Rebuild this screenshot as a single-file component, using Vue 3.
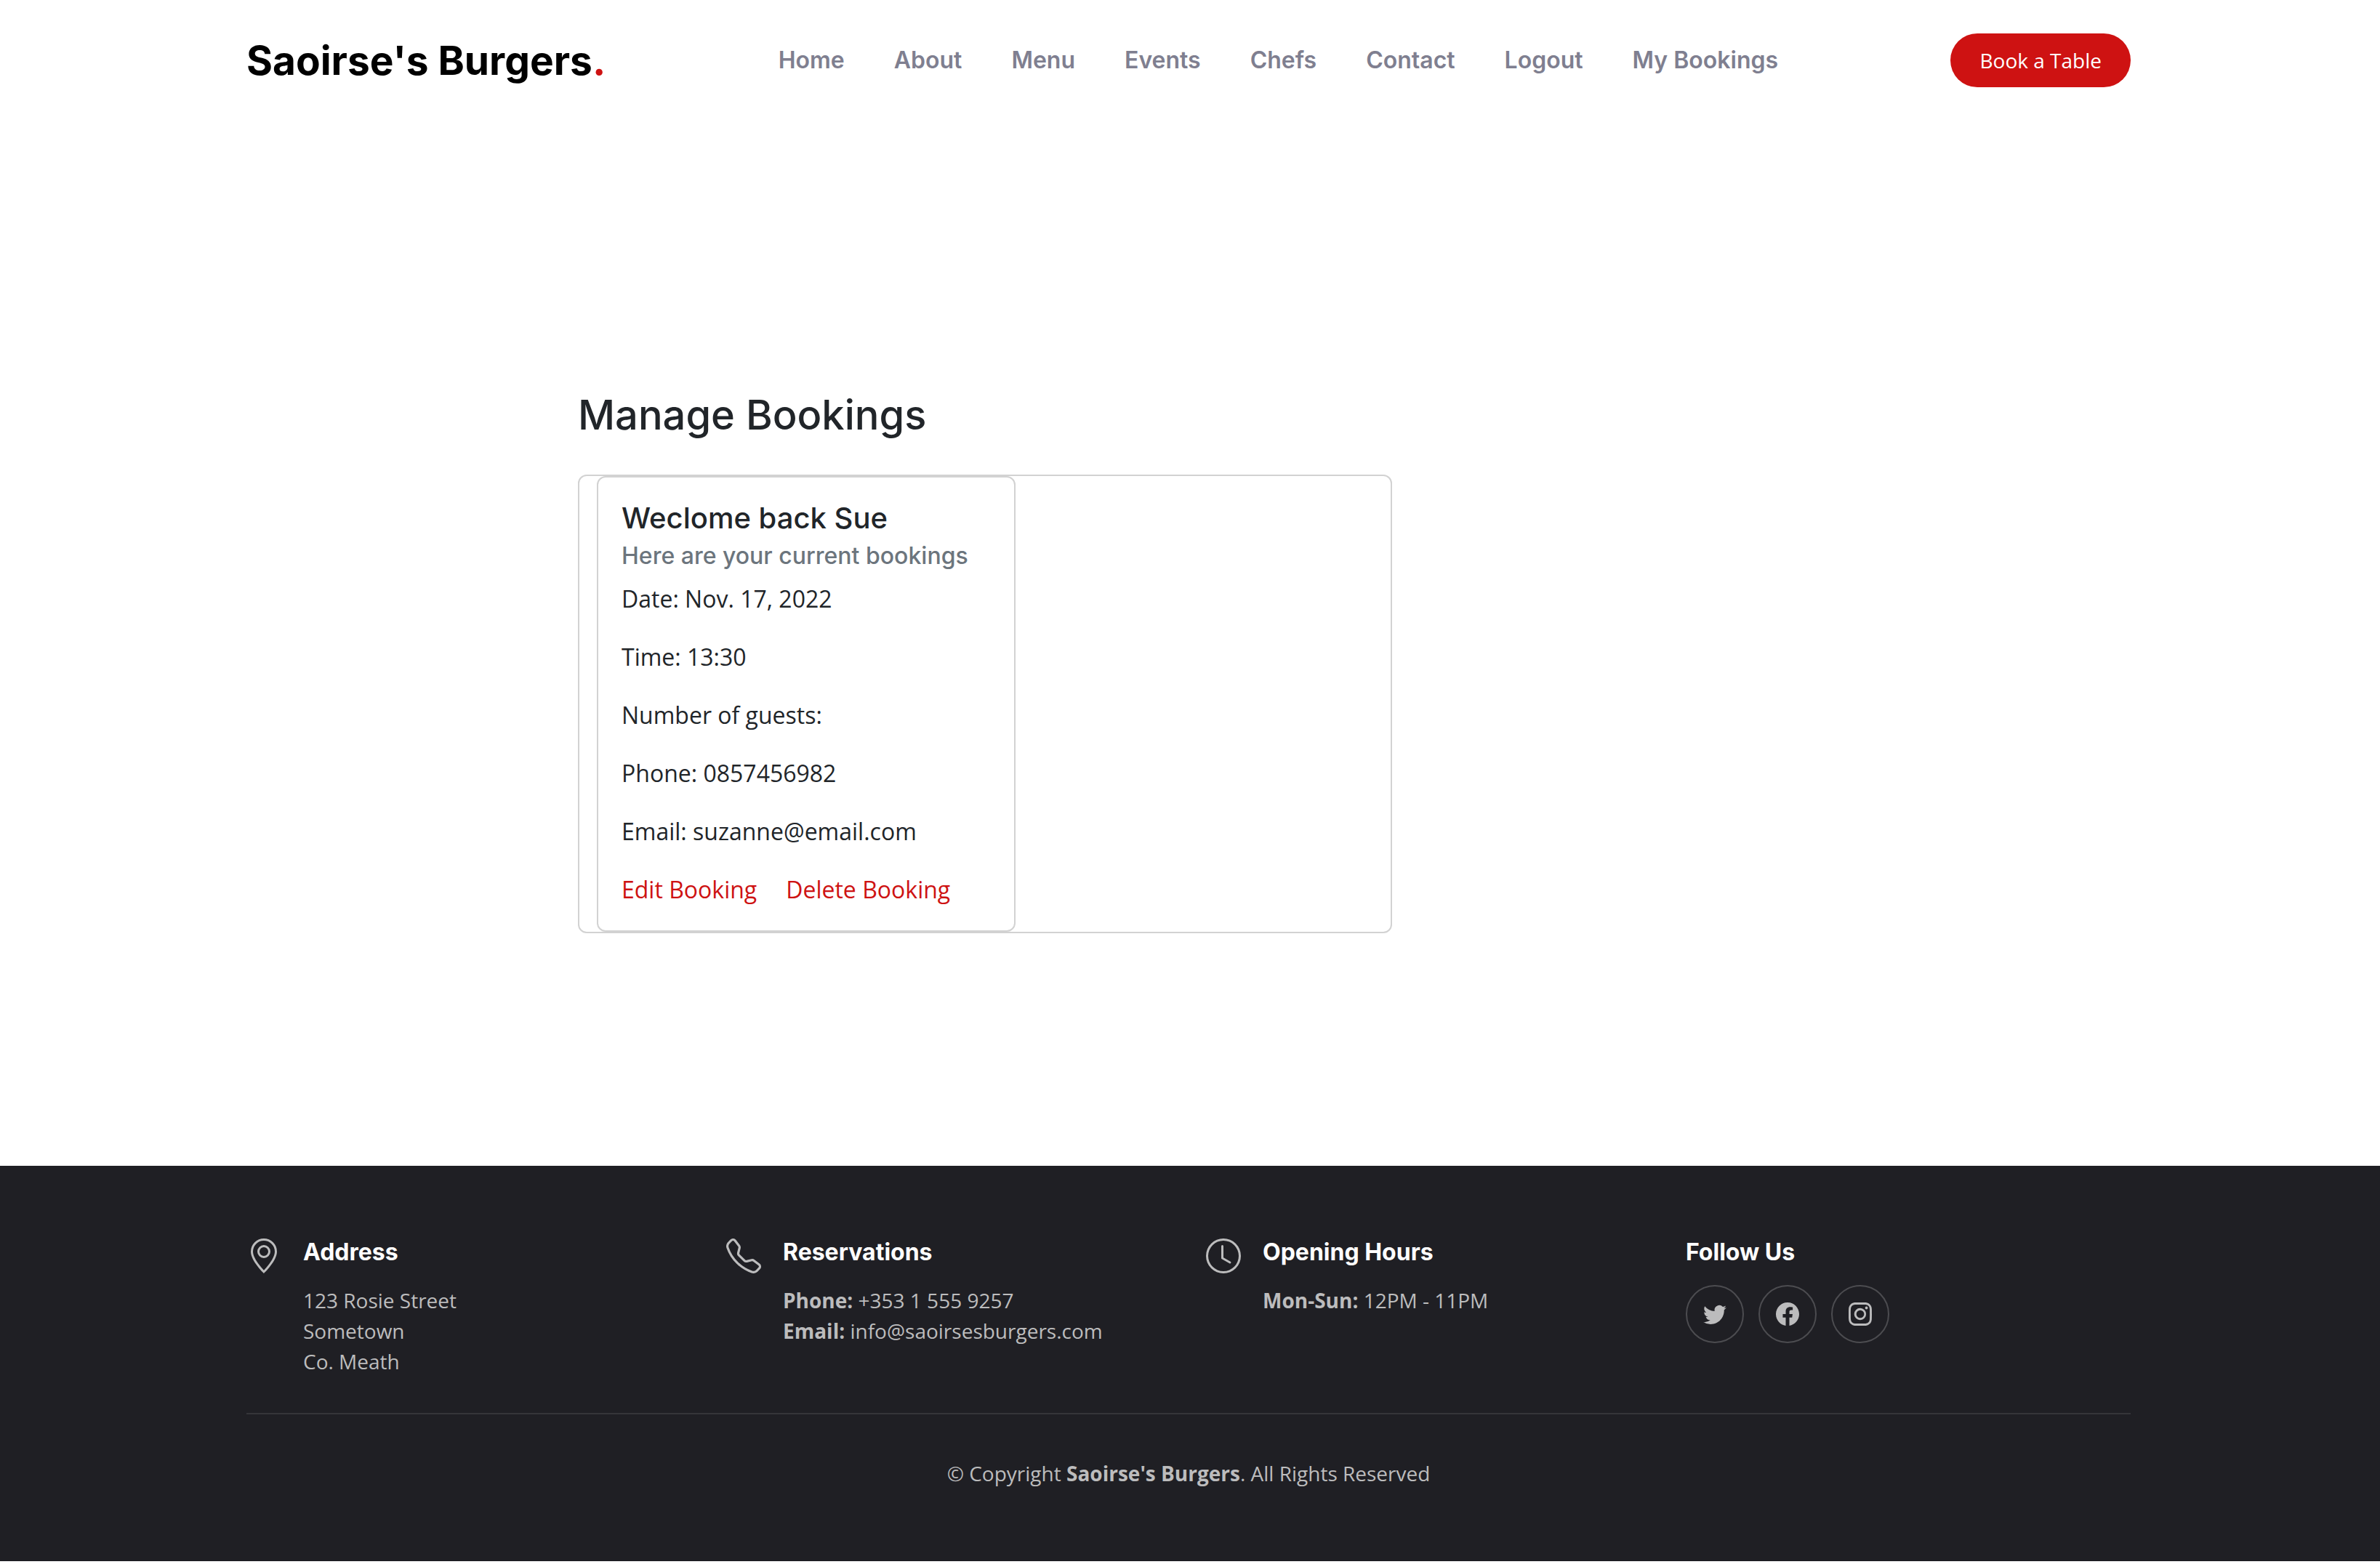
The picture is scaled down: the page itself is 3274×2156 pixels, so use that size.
<script setup>
const navLinks = ['Home', 'About', 'Menu', 'Events', 'Chefs', 'Contact', 'Logout', 'My Bookings']

const details = [
  'Date: Nov. 17, 2022',
  'Time: 13:30',
  'Number of guests:',
  'Phone: 0857456982',
  'Email: suzanne@email.com',
]

const socials = [
  {
    name: 'Twitter',
    path: 'M5.026 15c6.038 0 9.341-5.003 9.341-9.334 0-.14 0-.282-.006-.422A6.685 6.685 0 0 0 16 3.542a6.658 6.658 0 0 1-1.889.518 3.301 3.301 0 0 0 1.447-1.817 6.533 6.533 0 0 1-2.087.793A3.286 3.286 0 0 0 7.875 6.03a9.325 9.325 0 0 1-6.767-3.429 3.289 3.289 0 0 0 1.018 4.382A3.323 3.323 0 0 1 .64 6.575v.045a3.288 3.288 0 0 0 2.632 3.218 3.203 3.203 0 0 1-.865.115 3.23 3.23 0 0 1-.614-.057 3.283 3.283 0 0 0 3.067 2.277A6.588 6.588 0 0 1 .78 13.58a6.32 6.32 0 0 1-.78-.045A9.344 9.344 0 0 0 5.026 15z',
  },
  {
    name: 'Facebook',
    path: 'M16 8.049c0-4.446-3.582-8.05-8-8.05C3.58 0-.002 3.603-.002 8.05c0 4.017 2.926 7.347 6.75 7.951v-5.625h-2.03V8.05H6.75V6.275c0-2.017 1.195-3.131 3.022-3.131.876 0 1.791.157 1.791.157v1.98h-1.009c-.993 0-1.303.621-1.303 1.258v1.51h2.218l-.354 2.326H9.25V16c3.824-.604 6.75-3.934 6.75-7.951z',
  },
  {
    name: 'Instagram',
    path: 'M8 0C5.829 0 5.556.01 4.703.048 3.85.088 3.269.222 2.76.42a3.917 3.917 0 0 0-1.417.923A3.927 3.927 0 0 0 .42 2.76C.222 3.268.087 3.85.048 4.7.01 5.555 0 5.827 0 8.001c0 2.172.01 2.444.048 3.297.04.852.174 1.433.372 1.942.205.526.478.972.923 1.417.444.445.89.719 1.416.923.51.198 1.09.333 1.942.372C5.555 15.99 5.827 16 8 16s2.444-.01 3.298-.048c.851-.04 1.434-.174 1.943-.372a3.916 3.916 0 0 0 1.416-.923c.445-.445.718-.891.923-1.417.197-.509.332-1.09.372-1.942C15.99 10.445 16 10.173 16 8s-.01-2.445-.048-3.299c-.04-.851-.175-1.433-.372-1.941a3.926 3.926 0 0 0-.923-1.417A3.911 3.911 0 0 0 13.24.42c-.51-.198-1.092-.333-1.943-.372C10.443.01 10.172 0 7.998 0h.003zm-.717 1.442h.718c2.136 0 2.389.007 3.232.046.78.035 1.204.166 1.486.275.373.145.64.319.92.599.28.28.453.546.598.92.11.281.24.705.275 1.485.039.843.047 1.096.047 3.231s-.008 2.389-.047 3.232c-.035.78-.166 1.203-.275 1.485a2.47 2.47 0 0 1-.599.919c-.28.28-.546.453-.92.598-.28.11-.704.24-1.485.276-.843.038-1.096.047-3.232.047s-2.39-.009-3.233-.047c-.78-.036-1.203-.166-1.485-.276a2.478 2.478 0 0 1-.92-.598 2.48 2.48 0 0 1-.6-.92c-.109-.281-.24-.705-.275-1.485-.038-.843-.046-1.096-.046-3.233 0-2.136.008-2.388.046-3.231.036-.78.166-1.204.276-1.486.145-.373.319-.64.599-.92.28-.28.546-.453.92-.598.282-.11.705-.24 1.485-.276.738-.034 1.024-.044 2.515-.045v.002zm4.988 1.328a.96.96 0 1 0 0 1.92.96.96 0 0 0 0-1.92zm-4.27 1.122a4.109 4.109 0 1 0 0 8.217 4.109 4.109 0 0 0 0-8.217zm0 1.441a2.667 2.667 0 1 1 0 5.334 2.667 2.667 0 0 1 0-5.334z',
  },
]
</script>

<template>
  <div class="page">
    <header class="header">
      <div class="container header-row">
        <a href="#" class="logo">Saoirse's Burgers<span class="dot">.</span></a>
        <nav class="nav">
          <a v-for="link in navLinks" :key="link" href="#" class="nav-link">{{ link }}</a>
        </nav>
        <a href="#" class="book">Book a Table</a>
      </div>
    </header>

    <main class="main">
      <div class="container">
        <section class="bookings">
          <h2 class="heading">Manage Bookings</h2>
          <div class="panel">
            <article class="card">
              <h5 class="card-title">Weclome back Sue</h5>
              <h6 class="card-subtitle">Here are your current bookings</h6>
              <p v-for="line in details" :key="line" class="detail">{{ line }}</p>
              <div class="actions">
                <a href="#" class="action">Edit Booking</a>
                <a href="#" class="action">Delete Booking</a>
              </div>
            </article>
          </div>
        </section>
      </div>
    </main>

    <footer class="footer">
      <div class="container columns">
        <section class="column">
          <svg class="icon" viewBox="0 0 16 16" aria-hidden="true">
            <path d="M12.166 8.94c-.524 1.062-1.234 2.12-1.96 3.07A31.493 31.493 0 0 1 8 14.58a31.481 31.481 0 0 1-2.206-2.57c-.726-.95-1.436-2.008-1.96-3.07C3.304 7.867 3 6.862 3 6a5 5 0 0 1 10 0c0 .862-.305 1.867-.834 2.94zM8 16s6-5.686 6-10A6 6 0 0 0 2 6c0 4.314 6 10 6 10z" />
            <path d="M8 8a2 2 0 1 1 0-4 2 2 0 0 1 0 4zm0 1a3 3 0 1 0 0-6 3 3 0 0 0 0 6z" />
          </svg>
          <div>
            <h4 class="column-title">Address</h4>
            <p class="column-text">123 Rosie Street<br />Sometown<br />Co. Meath</p>
          </div>
        </section>

        <section class="column">
          <svg class="icon" viewBox="0 0 16 16" aria-hidden="true">
            <path d="M3.654 1.328a.678.678 0 0 0-1.015-.063L1.605 2.3c-.483.484-.661 1.169-.45 1.77a17.568 17.568 0 0 0 4.168 6.608 17.569 17.569 0 0 0 6.608 4.168c.601.211 1.286.033 1.77-.45l1.034-1.034a.678.678 0 0 0-.063-1.015l-2.307-1.794a.678.678 0 0 0-.58-.122l-2.19.547a1.745 1.745 0 0 1-1.657-.459L5.482 8.062a1.745 1.745 0 0 1-.46-1.657l.548-2.19a.678.678 0 0 0-.122-.58L3.654 1.328zM1.884.511a1.745 1.745 0 0 1 2.612.163L6.29 2.98c.329.423.445.974.315 1.494l-.547 2.19a.678.678 0 0 0 .178.643l2.457 2.457a.678.678 0 0 0 .644.178l2.189-.547a1.745 1.745 0 0 1 1.494.315l2.306 1.794c.829.645.905 1.87.163 2.611l-1.034 1.034c-.74.74-1.846 1.065-2.877.702a18.634 18.634 0 0 1-7.01-4.42 18.634 18.634 0 0 1-4.42-7.009c-.362-1.03-.037-2.137.703-2.877L1.885.511z" />
          </svg>
          <div>
            <h4 class="column-title">Reservations</h4>
            <p class="column-text">
              <strong>Phone:</strong> +353 1 555 9257<br />
              <strong>Email:</strong> info@saoirsesburgers.com
            </p>
          </div>
        </section>

        <section class="column">
          <svg class="icon" viewBox="0 0 16 16" aria-hidden="true">
            <path d="M8 3.5a.5.5 0 0 0-1 0V9a.5.5 0 0 0 .252.434l3.5 2a.5.5 0 0 0 .496-.868L8 8.71V3.5z" />
            <path d="M8 16A8 8 0 1 0 8 0a8 8 0 0 0 0 16zm7-8A7 7 0 1 1 1 8a7 7 0 0 1 14 0z" />
          </svg>
          <div>
            <h4 class="column-title">Opening Hours</h4>
            <p class="column-text"><strong>Mon-Sun:</strong> 12PM - 11PM</p>
          </div>
        </section>

        <section class="column">
          <div>
            <h4 class="column-title">Follow Us</h4>
            <div class="socials">
              <a v-for="s in socials" :key="s.name" href="#" class="social" :aria-label="s.name">
                <svg class="social-icon" viewBox="0 0 16 16" aria-hidden="true"><path :d="s.path" /></svg>
              </a>
            </div>
          </div>
        </section>
      </div>

      <div class="container">
        <p class="copyright">© Copyright <strong>Saoirse's Burgers</strong>. All Rights Reserved</p>
      </div>
    </footer>
  </div>
</template>

<style>
body {
  margin: 0;
  background: #fff;
}
</style>

<style scoped>
.page {
  font-family: "Open Sans", sans-serif;
  font-size: 32px;
  line-height: 48px;
  color: #212529;
}

h2, h4, h5, h6, p {
  margin: 0;
}

a {
  color: #ce1212;
  text-decoration: none;
}

.header, .main, .footer {
  padding-right: 4px;
}

.container {
  max-width: 2592px;
  margin: 0 auto;
}

.header-row {
  display: flex;
  align-items: center;
  justify-content: space-between;
  min-height: 166px;
}

.logo {
  font-family: Inter, sans-serif;
  font-size: 55px;
  font-weight: 700;
  line-height: 68px;
  color: #000;
}

.logo .dot {
  color: #ce1212;
}

.nav {
  display: flex;
  gap: 68px;
}

.nav-link {
  font-family: Inter, sans-serif;
  font-weight: 600;
  color: #7f7f90;
}

.book {
  padding: 16px 40px;
  border-radius: 50px;
  background: #ce1212;
  color: #fff;
  font-size: 28px;
  line-height: 42px;
}

.main .container {
  padding: 371px 0 320px;
}

.bookings {
  max-width: 1120px;
  margin-left: 456px;
}

.heading {
  margin-bottom: 48px;
  font-family: Inter, sans-serif;
  font-size: 56px;
  font-weight: 500;
  line-height: 68px;
}

.panel {
  display: flex;
  padding: 0 24px;
  border: 2px solid #d2d2d2;
  border-radius: 12px;
}

.card {
  box-sizing: border-box;
  width: 576px;
  padding: 32px;
  border: 2px solid #d2d2d2;
  border-radius: 12px;
}

.card-title {
  margin-bottom: 8px;
  font-family: Inter, sans-serif;
  font-size: 40px;
  font-weight: 500;
  line-height: 48px;
}

.card-subtitle {
  margin-bottom: 16px;
  font-family: Inter, sans-serif;
  font-size: 32px;
  font-weight: 500;
  line-height: 39px;
  color: #6c757d;
}

.detail {
  margin-bottom: 32px;
}

.actions {
  display: flex;
  gap: 40px;
}

.footer {
  padding-top: 100px;
  padding-bottom: 100px;
  background: #1f1f24;
  color: #bcbcbd;
  font-size: 28px;
  line-height: 42px;
}

.columns {
  display: grid;
  grid-template-columns: repeat(4, 1fr);
  column-gap: 48px;
  padding-bottom: 50px;
}

.column {
  display: flex;
  align-items: flex-start;
  gap: 30px;
}

.icon {
  flex: none;
  width: 48px;
  height: 48px;
  fill: currentColor;
}

.column-title {
  margin-bottom: 26px;
  font-family: Inter, sans-serif;
  font-size: 32px;
  font-weight: 700;
  line-height: 38px;
  color: #fff;
}

.socials {
  display: flex;
  gap: 20px;
}

.social {
  display: flex;
  align-items: center;
  justify-content: center;
  box-sizing: border-box;
  width: 80px;
  height: 80px;
  border: 2px solid #4c4c50;
  border-radius: 50%;
  color: #bcbcbd;
}

.social-icon {
  width: 32px;
  height: 32px;
  fill: currentColor;
}

.copyright {
  padding-top: 60px;
  border-top: 2px solid #353539;
  text-align: center;
}
</style>
